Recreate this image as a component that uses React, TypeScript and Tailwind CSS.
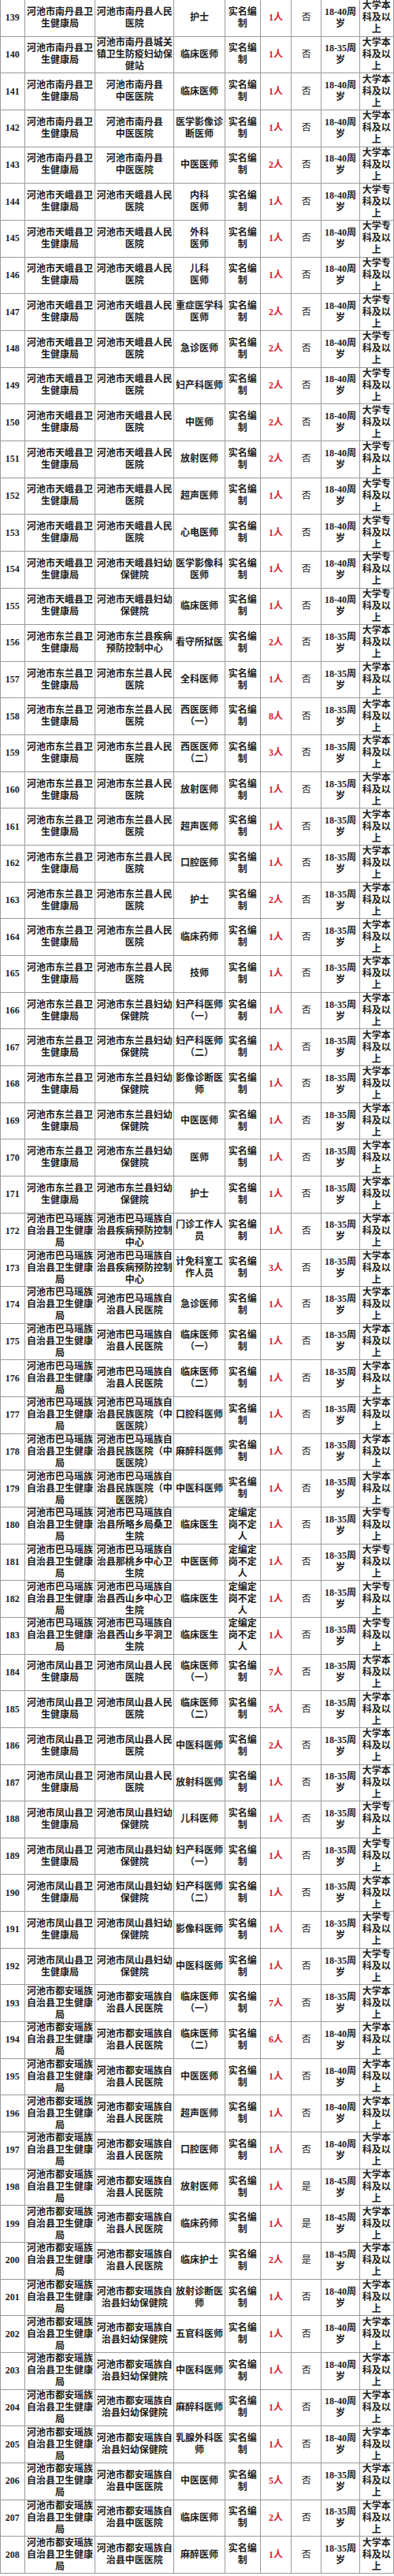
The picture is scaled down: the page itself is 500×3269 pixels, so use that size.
const NDJ = '河池市南丹县卫生健康局';
const TEJ = '河池市天峨县卫生健康局';
const DLJ = '河池市东兰县卫生健康局';
const BMJ = '河池市巴马瑶族自治县卫生健康局';
const FSJ = '河池市凤山县卫生健康局';
const DAJ = '河池市都安瑶族自治县卫生健康局';

const SM = '实名编制';
const DB = '定编定岗不定人';
const BK = '大学本科及以上';
const ZK = '大学专科及以上';

type Row = [number, string, string, string, string, string, string, string, string];

const rows: Row[] = [
  [139, NDJ, '河池市南丹县人民医院', '护士', SM, '1人', '否', '18-40', BK],
  [140, NDJ, '河池市南丹县城关镇卫生防疫妇幼保健站', '临床医师', SM, '1人', '否', '18-35', BK],
  [141, NDJ, '河池市南丹县\n中医医院', '临床医师', SM, '1人', '否', '18-40', BK],
  [142, NDJ, '河池市南丹县\n中医医院', '医学影像诊断医师', SM, '1人', '否', '18-40', BK],
  [143, NDJ, '河池市南丹县\n中医医院', '中医医师', SM, '2人', '否', '18-40', BK],
  [144, TEJ, '河池市天峨县人民医院', '内科\n医师', SM, '1人', '否', '18-40', ZK],
  [145, TEJ, '河池市天峨县人民医院', '外科\n医师', SM, '1人', '否', '18-40', ZK],
  [146, TEJ, '河池市天峨县人民医院', '儿科\n医师', SM, '1人', '否', '18-40', ZK],
  [147, TEJ, '河池市天峨县人民医院', '重症医学科医师', SM, '2人', '否', '18-40', ZK],
  [148, TEJ, '河池市天峨县人民医院', '急诊医师', SM, '2人', '否', '18-40', ZK],
  [149, TEJ, '河池市天峨县人民医院', '妇产科医师', SM, '2人', '否', '18-40', ZK],
  [150, TEJ, '河池市天峨县人民医院', '中医师', SM, '2人', '否', '18-40', ZK],
  [151, TEJ, '河池市天峨县人民医院', '放射医师', SM, '2人', '否', '18-40', ZK],
  [152, TEJ, '河池市天峨县人民医院', '超声医师', SM, '1人', '否', '18-40', ZK],
  [153, TEJ, '河池市天峨县人民医院', '心电医师', SM, '1人', '否', '18-40', ZK],
  [154, TEJ, '河池市天峨县妇幼保健院', '医学影像科医师', SM, '1人', '否', '18-40', ZK],
  [155, TEJ, '河池市天峨县妇幼保健院', '临床医师', SM, '1人', '否', '18-40', ZK],
  [156, DLJ, '河池市东兰县疾病预防控制中心', '看守所狱医', SM, '2人', '否', '18-35', BK],
  [157, DLJ, '河池市东兰县人民医院', '全科医师', SM, '1人', '否', '18-35', BK],
  [158, DLJ, '河池市东兰县人民医院', '西医医师\n（一）', SM, '8人', '否', '18-35', BK],
  [159, DLJ, '河池市东兰县人民医院', '西医医师\n（二）', SM, '3人', '否', '18-35', BK],
  [160, DLJ, '河池市东兰县人民医院', '放射医师', SM, '1人', '否', '18-35', BK],
  [161, DLJ, '河池市东兰县人民医院', '超声医师', SM, '1人', '否', '18-35', BK],
  [162, DLJ, '河池市东兰县人民医院', '口腔医师', SM, '1人', '否', '18-35', BK],
  [163, DLJ, '河池市东兰县人民医院', '护士', SM, '2人', '否', '18-35', BK],
  [164, DLJ, '河池市东兰县人民医院', '临床药师', SM, '1人', '否', '18-35', BK],
  [165, DLJ, '河池市东兰县人民医院', '技师', SM, '1人', '否', '18-35', BK],
  [166, DLJ, '河池市东兰县妇幼保健院', '妇产科医师\n（一）', SM, '1人', '否', '18-35', BK],
  [167, DLJ, '河池市东兰县妇幼保健院', '妇产科医师\n（二）', SM, '1人', '否', '18-35', BK],
  [168, DLJ, '河池市东兰县妇幼保健院', '影像诊断医师', SM, '1人', '否', '18-35', BK],
  [169, DLJ, '河池市东兰县妇幼保健院', '中医医师', SM, '1人', '否', '18-35', BK],
  [170, DLJ, '河池市东兰县妇幼保健院', '医师', SM, '1人', '否', '18-35', BK],
  [171, DLJ, '河池市东兰县妇幼保健院', '护士', SM, '1人', '否', '18-35', BK],
  [172, BMJ, '河池市巴马瑶族自治县疾病预防控制中心', '门诊工作人员', SM, '1人', '否', '18-35', BK],
  [173, BMJ, '河池市巴马瑶族自治县疾病预防控制中心', '计免科室工作人员', SM, '3人', '否', '18-35', BK],
  [174, BMJ, '河池市巴马瑶族自治县人民医院', '急诊医师', SM, '1人', '否', '18-35', BK],
  [175, BMJ, '河池市巴马瑶族自治县人民医院', '临床医师\n（一）', SM, '1人', '否', '18-35', BK],
  [176, BMJ, '河池市巴马瑶族自治县人民医院', '临床医师\n（二）', SM, '1人', '否', '18-35', BK],
  [177, BMJ, '河池市巴马瑶族自治县民族医院（中医医院）', '口腔科医师', SM, '1人', '否', '18-35', BK],
  [178, BMJ, '河池市巴马瑶族自治县民族医院（中医医院）', '麻醉科医师', SM, '1人', '否', '18-35', BK],
  [179, BMJ, '河池市巴马瑶族自治县民族医院（中医医院）', '中医科医师', SM, '1人', '否', '18-35', BK],
  [180, BMJ, '河池市巴马瑶族自治县所略乡局桑卫生院', '临床医生', DB, '1人', '否', '18-35', ZK],
  [181, BMJ, '河池市巴马瑶族自治县那桃乡中心卫生院', '中医医师', DB, '1人', '否', '18-35', ZK],
  [182, BMJ, '河池市巴马瑶族自治县西山乡中心卫生院', '临床医生', DB, '1人', '否', '18-35', ZK],
  [183, BMJ, '河池市巴马瑶族自治县西山乡平洞卫生院', '临床医生', DB, '1人', '否', '18-35', ZK],
  [184, FSJ, '河池市凤山县人民医院', '临床医师\n（一）', SM, '7人', '否', '18-35', BK],
  [185, FSJ, '河池市凤山县人民医院', '临床医师\n（二）', SM, '5人', '否', '18-35', BK],
  [186, FSJ, '河池市凤山县人民医院', '中医科医师', SM, '2人', '否', '18-35', BK],
  [187, FSJ, '河池市凤山县人民医院', '放射科医师', SM, '1人', '否', '18-35', BK],
  [188, FSJ, '河池市凤山县妇幼保健院', '儿科医师', SM, '1人', '否', '18-35', ZK],
  [189, FSJ, '河池市凤山县妇幼保健院', '妇产科医师\n（一）', SM, '1人', '否', '18-35', ZK],
  [190, FSJ, '河池市凤山县妇幼保健院', '妇产科医师\n（二）', SM, '1人', '否', '18-35', BK],
  [191, FSJ, '河池市凤山县妇幼保健院', '影像科医师', SM, '1人', '否', '18-35', ZK],
  [192, FSJ, '河池市凤山县妇幼保健院', '中医科医师', SM, '1人', '否', '18-35', ZK],
  [193, DAJ, '河池市都安瑶族自治县人民医院', '临床医师\n（一）', SM, '7人', '否', '18-35', BK],
  [194, DAJ, '河池市都安瑶族自治县人民医院', '临床医师\n（二）', SM, '6人', '否', '18-40', BK],
  [195, DAJ, '河池市都安瑶族自治县人民医院', '中医医师', SM, '1人', '否', '18-40', BK],
  [196, DAJ, '河池市都安瑶族自治县人民医院', '超声医师', SM, '1人', '否', '18-40', BK],
  [197, DAJ, '河池市都安瑶族自治县人民医院', '口腔医师', SM, '1人', '否', '18-40', BK],
  [198, DAJ, '河池市都安瑶族自治县人民医院', '放射医师', SM, '1人', '是', '18-45', BK],
  [199, DAJ, '河池市都安瑶族自治县人民医院', '临床药师', SM, '1人', '是', '18-45', BK],
  [200, DAJ, '河池市都安瑶族自治县人民医院', '临床护士', SM, '2人', '是', '18-45', BK],
  [201, DAJ, '河池市都安瑶族自治县妇幼保健院', '放射诊断医师', SM, '1人', '否', '18-40', BK],
  [202, DAJ, '河池市都安瑶族自治县妇幼保健院', '五官科医师', SM, '1人', '否', '18-40', BK],
  [203, DAJ, '河池市都安瑶族自治县妇幼保健院', '中医科医师', SM, '1人', '否', '18-40', BK],
  [204, DAJ, '河池市都安瑶族自治县妇幼保健院', '麻醉科医师', SM, '1人', '否', '18-40', BK],
  [205, DAJ, '河池市都安瑶族自治县妇幼保健院', '乳腺外科医师', SM, '1人', '否', '18-40', BK],
  [206, DAJ, '河池市都安瑶族自治县中医医院', '中医医师', SM, '5人', '否', '18-35', BK],
  [207, DAJ, '河池市都安瑶族自治县中医医院', '临床医师', SM, '2人', '否', '18-35', BK],
  [208, DAJ, '河池市都安瑶族自治县中医医院', '麻醉医师', SM, '1人', '否', '18-35', BK],
];

// split text into lines of n characters, keeping manual breaks
function wrap(text: string, n: number) {
  return text
    .split('\n')
    .map((seg) => {
      const chars = Array.from(seg);
      const out: string[] = [];
      for (let i = 0; i < chars.length; i += n) out.push(chars.slice(i, i + n).join(''));
      return out.join('\n');
    })
    .join('\n');
}

const cell =
  'flex items-center justify-center text-center whitespace-pre-line border-r border-b border-[#9a9a9a] overflow-hidden';

export default function App() {
  return (
    <div className="w-[500px] bg-white text-[#1c1c1c] text-[12px] leading-[15px] font-bold font-['Liberation_Serif','Noto_Sans_CJK_SC',serif]">
      <div className="grid grid-cols-[31.7px_89.7px_100px_64.3px_45px_39.7px_37.7px_48.7px_43.2px] auto-rows-[46.67px]">
        {rows.map((r) => (
          <div key={r[0]} className="contents">
            <div className={cell + ' border-l'}>{r[0]}</div>
            <div className={cell}>{wrap(r[1], 7)}</div>
            <div className={cell}>{wrap(r[2], 8)}</div>
            <div className={cell}>{wrap(r[3], 5)}</div>
            <div className={cell}>{wrap(r[4], 3)}</div>
            <div className={cell + ' text-[#d9232b]'}>{r[5]}</div>
            <div className={cell + ' font-normal'}>{r[6]}</div>
            <div className={cell}>{r[7] + '周\n岁'}</div>
            <div className={cell}>{wrap(r[8], 3)}</div>
          </div>
        ))}
      </div>
    </div>
  );
}
